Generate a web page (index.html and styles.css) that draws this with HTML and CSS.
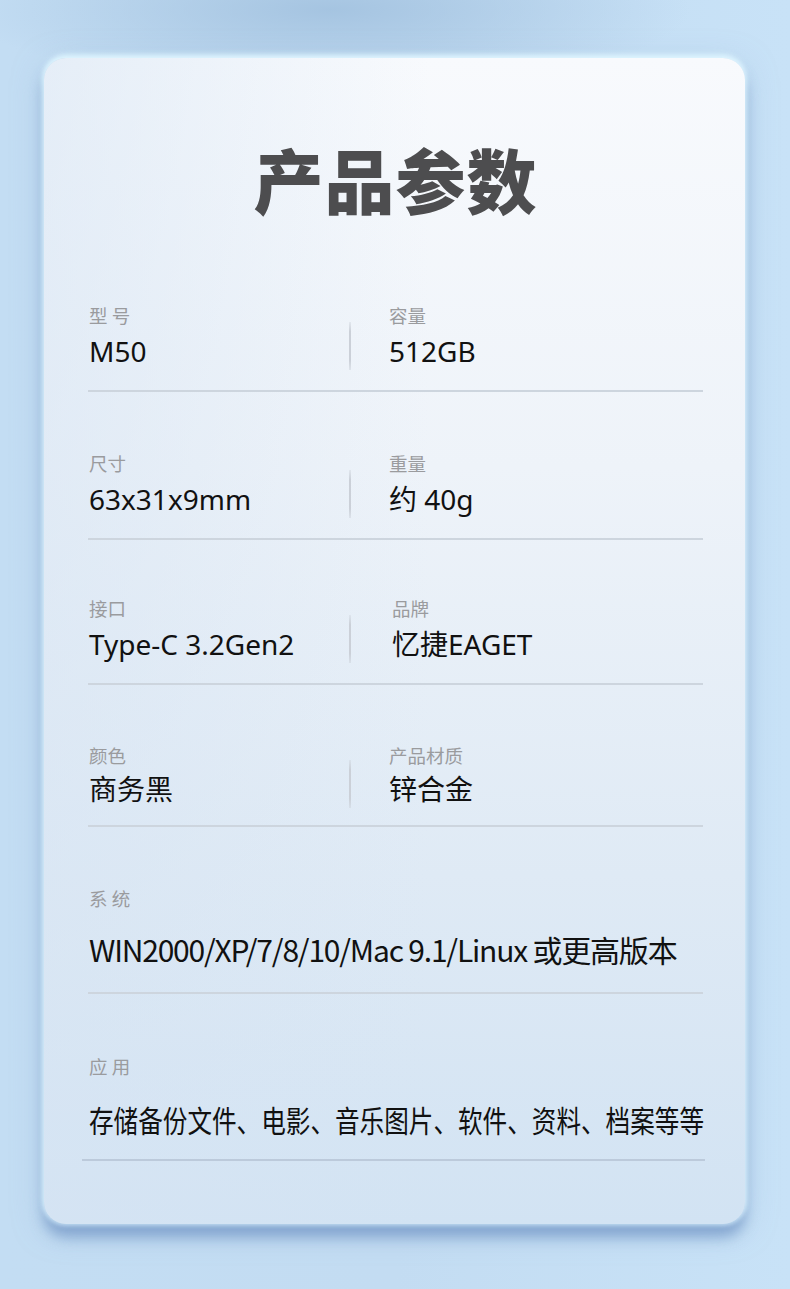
FILE: index.html
```html
<!DOCTYPE html>
<html lang="zh-CN">
<head>
<meta charset="utf-8">
<title>产品参数</title>
<link rel="stylesheet" href="styles.css">
</head>
<body>
<div class="page">
  <div class="card">
    <div class="title-wrap"><h1 class="title">产品参数</h1></div>

    <div class="row">
      <div class="cell left"><div class="label">型 号</div><div class="value">M50</div></div>
      <div class="divider"></div>
      <div class="cell right"><div class="label">容量</div><div class="value">512GB</div></div>
    </div>

    <div class="row row-b">
      <div class="cell left"><div class="label">尺寸</div><div class="value">63x31x9mm</div></div>
      <div class="divider"></div>
      <div class="cell right"><div class="label">重量</div><div class="value">约 40g</div></div>
    </div>

    <div class="row">
      <div class="cell left"><div class="label">接口</div><div class="value">Type-C 3.2Gen2</div></div>
      <div class="divider"></div>
      <div class="cell right brand"><div class="label">品牌</div><div class="value">忆捷EAGET</div></div>
    </div>

    <div class="row row-d">
      <div class="cell left"><div class="label">颜色</div><div class="value">商务黑</div></div>
      <div class="divider"></div>
      <div class="cell right"><div class="label">产品材质</div><div class="value">锌合金</div></div>
    </div>

    <div class="row wide sysrow">
      <div class="cell full"><div class="label">系 统</div><div class="value condensed sys">WIN2000/XP/7/8/10/Mac 9.1/Linux 或更高版本</div></div>
    </div>

    <div class="row wide last">
      <div class="cell full"><div class="label">应 用</div><div class="value condensed app">存储备份文件、电影、音乐图片、软件、资料、档案等等</div></div>
    </div>
  </div>
</div>
</body>
</html>
```

FILE: styles.css
```css
* { box-sizing: border-box; }
html, body { margin: 0; padding: 0; }
body {
  width: 790px;
  height: 1289px;
  overflow: hidden;
  font-family: "Noto Sans CJK SC", "Noto Sans", sans-serif;
  background:
    radial-gradient(ellipse 360px 80px at 330px 10px, rgba(160,192,222,0.85), rgba(160,192,222,0) 100%),
    linear-gradient(to right, #c3ddf3 0%, #c3dcf2 50%, #c8e2f7 100%);
}
.page {
  padding: 58px 45px 0 44px;
}
.card {
  width: 701px;
  height: 1166px;
  border-radius: 22px;
  padding: 0 42px 0 44px;
  background:
    linear-gradient(to right, rgba(214,228,243,0.55) 0%, rgba(214,228,243,0) 55%),
    linear-gradient(to bottom, #f8fafd 0%, #eef3f9 35%, #dfeaf5 70%, #d2e3f3 100%);
  box-shadow:
    0 -3px 6px rgba(225,248,255,0.95),
    0 0 4px 2px rgba(215,240,255,0.6),
    0 13px 14px rgba(110,145,195,0.7),
    0 6px 30px rgba(150,185,220,0.5);
}
.title-wrap {
  height: 189px;
  display: flex;
  justify-content: center;
  padding-top: 86px;
}
.title {
  margin: 0;
  font-size: 70px;
  line-height: 70px;
  font-weight: 900;
  color: #4d4d4f;
  letter-spacing: 1px;
}
.row {
  display: flex;
  align-items: flex-end;
  padding: 56px 0 22px 0;
  border-bottom: 2px solid #cdd5de;
}
.row.row-b { padding-top: 59px; }
.row.row-d { padding-top: 58px; padding-bottom: 19px; }
.row.row-d .label { margin-bottom: 5px; }
.row.wide { padding: 60px 0 20px 0; }
.row.sysrow { padding: 59px 0 26px 0; }
.row.last {
  margin: 0 -2px 0 -6px;
  padding-left: 6px;
  padding-bottom: 23px;
  border-bottom-color: #bccadb;
}
.cell.left { width: 261px; padding-left: 1px; }
.cell.right { padding-left: 38px; }
.cell.right.brand { padding-left: 41px; }
.cell.full { width: 100%; padding-left: 1px; }
.divider {
  width: 2px;
  height: 48px;
  margin-bottom: -2px;
  background: linear-gradient(to bottom, rgba(200,206,214,0.3), #cbd0d8 20%, #cbd0d8 80%, rgba(200,206,214,0.4));
}
.label {
  font-size: 18.5px;
  line-height: 24px;
  color: #9a9b9e;
  margin-bottom: 7px;
}
.value {
  font-family: "Noto Sans", "Noto Sans CJK SC", sans-serif;
  font-size: 28px;
  line-height: 34px;
  color: #111;
  white-space: nowrap;
}
.wide .label { margin-bottom: 24px; }
.sysrow .label { margin-bottom: 22px; }
.condensed {
  font-family: "Noto Sans CJK SC", "Noto Sans", sans-serif;
  font-size: 30px;
  transform-origin: left center;
}
.sys { letter-spacing: -1.2px; }
.app { transform: scaleX(0.82); }
```
